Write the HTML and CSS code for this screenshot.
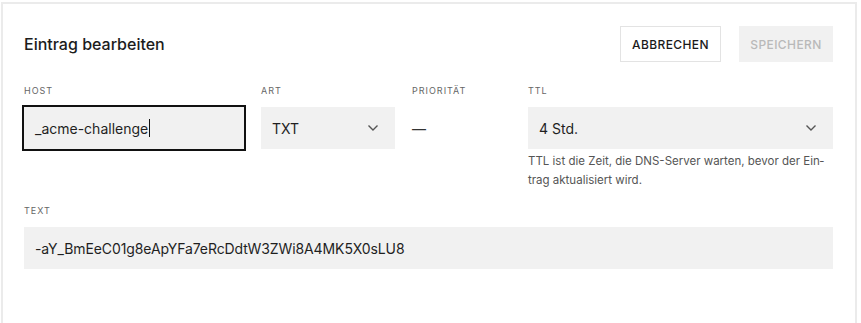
FILE: index.html
```html
<!DOCTYPE html>
<html lang="de">
<head>
    <meta charset="UTF-8">
    <title>Eintrag bearbeiten</title>
    <link rel="stylesheet" href="styles.css">
</head>
<body>
    <div class="edit-panel">
        <div class="panel-header">
            <h1>Eintrag bearbeiten</h1>
            <div class="actions">
                <button type="button" class="btn btn-cancel">Abbrechen</button>
                <button type="button" class="btn btn-save" disabled>Speichern</button>
            </div>
        </div>

        <div class="record-row">
            <div class="field">
                <label>Host</label>
                <div class="input input-focus">_acme-challenge<span class="caret"></span></div>
            </div>
            <div class="field">
                <label>Art</label>
                <div class="input select">
                    <span>TXT</span>
                    <svg width="12" height="8" viewBox="0 0 12 8"><path d="M1.5 1.5 L6 6 L10.5 1.5" fill="none" stroke="#555" stroke-width="1.4"/></svg>
                </div>
            </div>
            <div class="field">
                <label>Priorität</label>
                <div class="empty-value">—</div>
            </div>
            <div class="field">
                <label>TTL</label>
                <div class="input select">
                    <span>4 Std.</span>
                    <svg width="12" height="8" viewBox="0 0 12 8"><path d="M1.5 1.5 L6 6 L10.5 1.5" fill="none" stroke="#555" stroke-width="1.4"/></svg>
                </div>
                <p class="hint">TTL ist die Zeit, die DNS-Server warten, bevor der Ein&shy;trag aktualisiert wird.</p>
            </div>
        </div>

        <div class="field field-full">
            <label>Text</label>
            <div class="input input-value">-aY_BmEeC01g8eApYFa7eRcDdtW3ZWi8A4MK5X0sLU8</div>
        </div>
    </div>
</body>
</html>
```

FILE: styles.css
```css
* {
    margin: 0;
    padding: 0;
    box-sizing: border-box;
}

body {
    font-family: Inter, 'Noto Sans', Arial, sans-serif;
    color: #1f1f1f;
    background: #fff;
    height: 323px;
    overflow: hidden;
}

.edit-panel {
    margin: 2px 4px 0 1px;
    border: 2px solid #ebebeb;
    border-bottom: none;
    padding: 22px 22px 60px 21px;
    min-height: 330px;
}

.panel-header {
    display: flex;
    justify-content: space-between;
    align-items: center;
    height: 36px;
}

.panel-header h1 {
    font-size: 16px;
    font-weight: 500;
    color: #1c1c1c;
}

.actions {
    display: flex;
    gap: 18px;
}

.btn {
    height: 36px;
    font-family: inherit;
    font-size: 12px;
    font-weight: 500;
    letter-spacing: 0.4px;
    text-transform: uppercase;
    background: #fff;
    cursor: pointer;
}

.btn-cancel {
    width: 101px;
    border: 1px solid #e3e3e3;
    color: #1a1a1a;
}

.btn-save {
    width: 94px;
    border: none;
    background: #f1f1f1;
    color: #b9b9b9;
    cursor: default;
}

.record-row {
    display: grid;
    grid-template-columns: 220px 134px 99px 305px;
    column-gap: 17px;
    margin-top: 23px;
}

.field label {
    display: block;
    font-size: 9px;
    line-height: 12px;
    font-weight: 400;
    letter-spacing: 1px;
    text-transform: uppercase;
    color: #666;
    margin-bottom: 10px;
}

.input {
    height: 42px;
    display: flex;
    align-items: center;
    padding: 0 11px;
    background: #f1f1f1;
    font-size: 14px;
    color: #1f1f1f;
}

.input-value {
    letter-spacing: -0.1px;
}

.input-focus {
    box-shadow: 0 0 0 2px #111;
}

.caret {
    display: inline-block;
    width: 1px;
    height: 18px;
    background: #111;
    margin-left: 1px;
}

.select {
    justify-content: space-between;
    padding-right: 16px;
}

.empty-value {
    height: 42px;
    display: flex;
    align-items: center;
    font-size: 14px;
    color: #333;
}

.hint {
    margin-top: 3px;
    font-size: 11.5px;
    line-height: 19px;
    color: #555;
    hyphens: manual;
}

.field-full {
    margin-top: 15px;
}
```
